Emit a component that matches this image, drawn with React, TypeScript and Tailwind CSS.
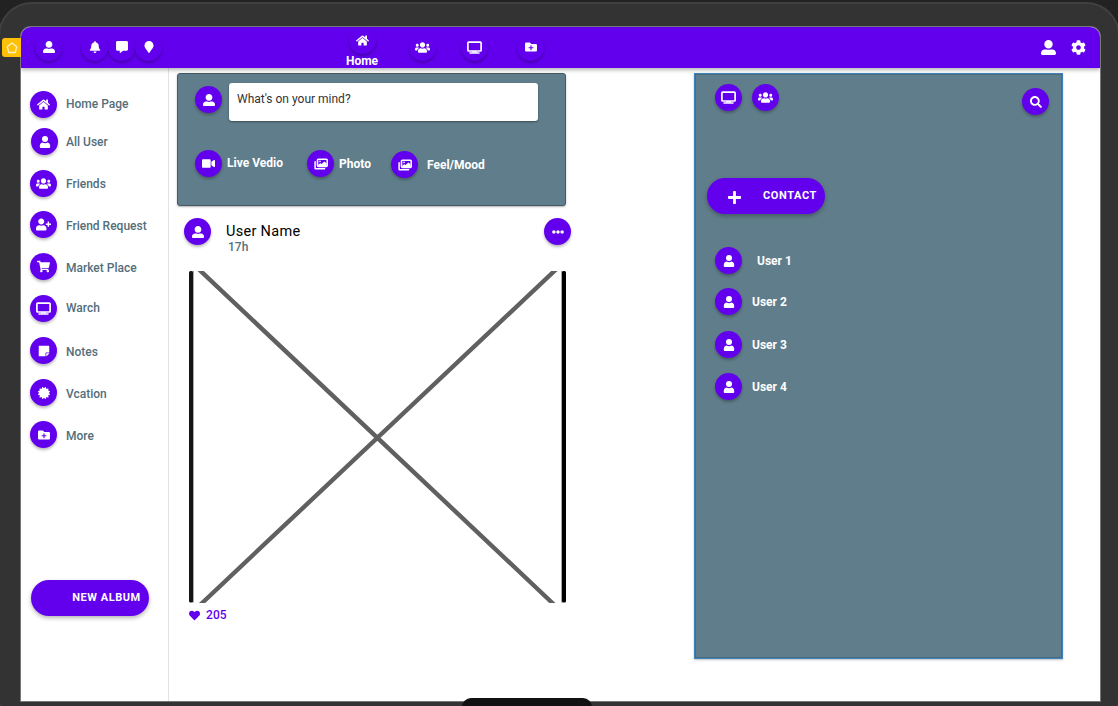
import type { ComponentType } from "react";
import {
  FaBell, FaCertificate, FaCog, FaCommentAlt, FaEllipsisH, FaFolderPlus, FaHeart, FaHome,
  FaMapMarker, FaPlus, FaSearch, FaShoppingCart, FaStickyNote, FaUserAlt,
  FaUserPlus, FaUsers, FaVideo,
} from "react-icons/fa";

type Icon = ComponentType<{ className?: string }>;

function TvIcon({ className = "" }: { className?: string }) {
  return (
    <svg className={className} viewBox="0 0 15 15" fill="none" stroke="currentColor">
      <rect x="0.9" y="2.2" width="13.2" height="8.8" rx="0.7" strokeWidth="1.7" />
      <path d="M3 13.1H12" strokeWidth="1.5" strokeLinecap="round" />
      <path d="M5 11.9H10" strokeWidth="1.2" />
    </svg>
  );
}

function ImagesIcon({ className = "" }: { className?: string }) {
  return (
    <svg className={className} viewBox="0 0 14 14" fill="none" stroke="currentColor" strokeLinejoin="round">
      <path d="M1.1 4.8V11.2Q1.1 11.8 1.7 11.8H10.6" strokeWidth="1.5" strokeLinecap="round" />
      <rect x="3.5" y="2.2" width="9.7" height="7.2" rx="0.8" strokeWidth="1.6" />
      <path d="M4.4 8.9V7.5L6.4 6.2L7.6 7L10.4 4.5L12.5 6.3V8.9Z" fill="currentColor" stroke="none" />
      <circle cx="6" cy="4.4" r="0.8" fill="currentColor" stroke="none" />
    </svg>
  );
}

function PersonIcon({ className = "" }: { className?: string }) {
  return (
    <svg className={className} viewBox="0 0 12 12" fill="currentColor">
      <circle cx="6" cy="3" r="3" />
      <path d="M3.4 6.5Q6 8.1 8.6 6.5Q11.2 7 11.2 10V11Q11.2 12 10.2 12H1.8Q0.8 12 0.8 11V10Q0.8 7 3.4 6.5Z" />
    </svg>
  );
}

function RoundButton({ icon: I, className = "", size = "size-3" }: { icon: Icon; className?: string; size?: string }) {
  return (
    <button
      className={`flex size-[27px] shrink-0 items-center justify-center rounded-full bg-[#6200ee] text-white shadow-[0_2px_3px_rgba(0,0,0,0.28)] ${className}`}
    >
      <I className={size} />
    </button>
  );
}

const menu: { label: string; icon: Icon; row: string; text: string; size?: string }[] = [
  { label: "Home Page", icon: FaHome, row: "", text: "ml-[9px] pb-px", size: "size-[13px]" },
  { label: "All User", icon: PersonIcon, row: "mt-[10px] pl-px", text: "ml-2" },
  { label: "Friends", icon: FaUsers, row: "mt-[15px]", text: "ml-[9px]", size: "size-[15px]" },
  { label: "Friend Request", icon: FaUserPlus, row: "mt-[14px]", text: "ml-[9px] pt-0.5", size: "size-[15px]" },
  { label: "Market Place", icon: FaShoppingCart, row: "mt-[15px]", text: "ml-[9px] pt-0.5", size: "size-[13px]" },
  { label: "Warch", icon: TvIcon, row: "mt-[15px]", text: "ml-[9px] pb-0.5", size: "size-[15px]" },
  { label: "Notes", icon: FaStickyNote, row: "mt-[15px]", text: "ml-[9px] pt-0.5" },
  { label: "Vcation", icon: FaCertificate, row: "mt-[15px]", text: "ml-[9px] pt-0.5" },
  { label: "More", icon: FaFolderPlus, row: "mt-[15px]", text: "ml-[9px] pt-0.5" },
];

const contacts = [
  { name: "User 1", row: "", text: "ml-[15px]" },
  { name: "User 2", row: "mt-[14px]", text: "ml-[10px]" },
  { name: "User 3", row: "mt-4", text: "ml-[10px]" },
  { name: "User 4", row: "mt-[15px]", text: "ml-[10px]" },
];

function Header() {
  return (
    <header className="relative z-10 flex h-[41px] shrink-0 items-center bg-[#6200ee] pb-px pl-[14px] pr-[14px] text-white shadow-[0_2px_4px_rgba(0,0,0,0.3)]">
      <RoundButton icon={FaUserAlt} />
      <RoundButton icon={FaBell} className="ml-[19px]" />
      <RoundButton icon={FaCommentAlt} />
      <RoundButton icon={FaMapMarker} />
      <div className="ml-[183px] flex h-full w-[34px] flex-col items-center">
        <RoundButton icon={FaHome} size="size-[13px]" />
        <span className="text-[12px] font-bold leading-[14px]">Home</span>
      </div>
      <RoundButton icon={FaUsers} className="ml-[30px]" size="size-[15px]" />
      <RoundButton icon={TvIcon} className="ml-[25px]" size="size-[15px]" />
      <RoundButton icon={FaFolderPlus} className="ml-[29px]" />
      <FaUserAlt className="ml-auto size-[15px]" />
      <FaCog className="ml-[15px] size-[15px]" />
    </header>
  );
}

function Sidebar() {
  return (
    <nav className="flex w-[148px] shrink-0 flex-col border-r border-[#dfe3e5] pl-[9px] pt-[23px]">
      {menu.map((m) => (
        <div key={m.label} className={`flex h-[27px] items-center ${m.row}`}>
          <RoundButton icon={m.icon} size={m.size} />
          <span className={`whitespace-nowrap text-[12px] font-medium text-[#546e7a] ${m.text}`}>{m.label}</span>
        </div>
      ))}
      <button className="ml-[1px] mt-[132px] h-9 w-[118px] shrink-0 rounded-full bg-[#6200ee] pl-[33px] text-[11px] font-bold tracking-[0.55px] text-white shadow-[0_2px_4px_rgba(0,0,0,0.3)]">
        NEW ALBUM
      </button>
    </nav>
  );
}

function Composer() {
  return (
    <section className="h-[133px] w-[389px] rounded-[3px] border border-[#455a64] bg-[#607d8b] pl-[17px] pt-[9px] text-[12px] font-bold text-white shadow-[0_1px_2px_rgba(0,0,0,0.3)]">
      <div className="flex">
        <RoundButton icon={FaUserAlt} className="mt-[3px]" />
        <div className="ml-[7px] h-[38px] w-[309px] rounded-[3px] bg-white pl-2 pt-2 text-[12px] font-normal leading-4 text-[#333] shadow-[0_1px_2px_rgba(0,0,0,0.4)]">
          What's on your mind?
        </div>
      </div>
      <div className="mt-[29px] flex items-start">
        <RoundButton icon={FaVideo} size="size-[13px]" />
        <span className="ml-[5px] w-[58px] whitespace-nowrap pt-[5px] leading-4">Live Vedio</span>
        <RoundButton icon={ImagesIcon} className="ml-[22px]" size="size-[14px]" />
        <span className="ml-[5px] w-[33px] pt-[6px] leading-4">Photo</span>
        <RoundButton icon={ImagesIcon} className="ml-[19px] mt-[1px]" size="size-[14px]" />
        <span className="ml-[9px] pt-[7px] leading-4">Feel/Mood</span>
      </div>
    </section>
  );
}

function Post() {
  return (
    <article className="mt-[12px] flex w-[394px] flex-col pl-[7px]">
      <div className="flex items-start">
        <RoundButton icon={FaUserAlt} />
        <div className="ml-[15px] pt-[4px]">
          <h2 className="text-[14.5px] font-normal leading-[19px] tracking-[0.3px] text-black">User Name</h2>
          <p className="pl-[2px] text-[12px] font-medium leading-[13px] text-[#546e7a]">17h</p>
        </div>
        <RoundButton icon={FaEllipsisH} className="ml-auto" />
      </div>
      <svg className="ml-[5px] mt-[17px] h-[332px] w-[377px]" viewBox="0 0 377 332">
        <path d="M9 -2.5L365 333.5M368 -2.5L11.5 333.5" stroke="#606060" strokeWidth="4.4" />
        <rect x="3" width="2" height="331.5" fill="#aaa" />
        <rect width="4" height="331.5" rx="1.5" fill="#151515" />
        <rect x="372" width="2" height="331.5" fill="#aaa" />
        <rect x="373" width="4" height="331.5" rx="1.5" fill="#000" />
      </svg>
      <div className="ml-[5px] mt-[4px] flex items-center text-[12px] font-medium leading-4 text-[#6200ee]">
        <FaHeart className="size-[11px]" />
        <span className="ml-1.5 tracking-[0.1px]">205</span>
      </div>
    </article>
  );
}

function ContactPanel() {
  return (
    <aside className="ml-[123px] mt-[5px] flex h-[586px] w-[369px] flex-col border border-[#3f83bd] bg-[#607d8b] pl-[12px] text-[12px] font-bold text-white shadow-[inset_0_0_0_1px_#4a6c80,0_1px_2px_rgba(0,0,0,0.25)]">
      <div className="flex pr-[13px] pt-[10px]">
        <RoundButton icon={TvIcon} className="ml-[8px]" size="size-[15px]" />
        <RoundButton icon={FaUsers} className="ml-[10px]" size="size-[15px]" />
        <RoundButton icon={FaSearch} className="ml-auto mt-[4px]" />
      </div>
      <button className="mt-[63px] flex h-9 w-[118px] shrink-0 items-center rounded-full bg-[#6200ee] pl-[20px] text-[11px] font-bold tracking-[0.6px] shadow-[0_2px_4px_rgba(0,0,0,0.3)]">
        <FaPlus className="mt-0.5 size-[15px]" />
        <span className="ml-[21px] pt-px">CONTACT</span>
      </button>
      <ul className="mt-[33px] pl-2">
        {contacts.map((c) => (
          <li key={c.name} className={`flex items-center ${c.row}`}>
            <RoundButton icon={PersonIcon} />
            <span className={c.text}>{c.name}</span>
          </li>
        ))}
      </ul>
    </aside>
  );
}

export default function App() {
  return (
    <div className="relative h-[706px] w-[1118px] overflow-hidden bg-[#222] pt-[2px] font-['Roboto',sans-serif]">
      <div className="-ml-[2px] h-[730px] w-[1122px] rounded-[34px] border-2 border-[#404040] bg-[#333] pl-[21px] pt-[23px]">
        <div className="flex h-[674px] w-[1079px] flex-col overflow-hidden rounded-t-[10px] bg-white shadow-[0_0_0_1px_#777]">
          <Header />
          <div className="flex min-h-0 flex-1">
            <Sidebar />
            <main className="ml-2 w-[394px] shrink-0 pt-[5px]">
              <Composer />
              <Post />
            </main>
            <ContactPanel />
          </div>
        </div>
      </div>
      <div className="absolute left-[2px] top-[38px] flex h-[19px] w-[19px] items-center justify-center rounded-l-[3px] bg-[#ffc107]">
        <svg className="size-3" viewBox="0 0 12 12" fill="none" stroke="#fff3c4" strokeWidth="1.3" strokeLinejoin="round">
          <path d="M6 1L10.7 4.7L9.3 10.5H2.7L1.3 4.7Z" />
        </svg>
      </div>
      <div className="absolute left-[462px] top-[698px] h-5 w-[130px] rounded-t-[9px] bg-[#111]" />
    </div>
  );
}
